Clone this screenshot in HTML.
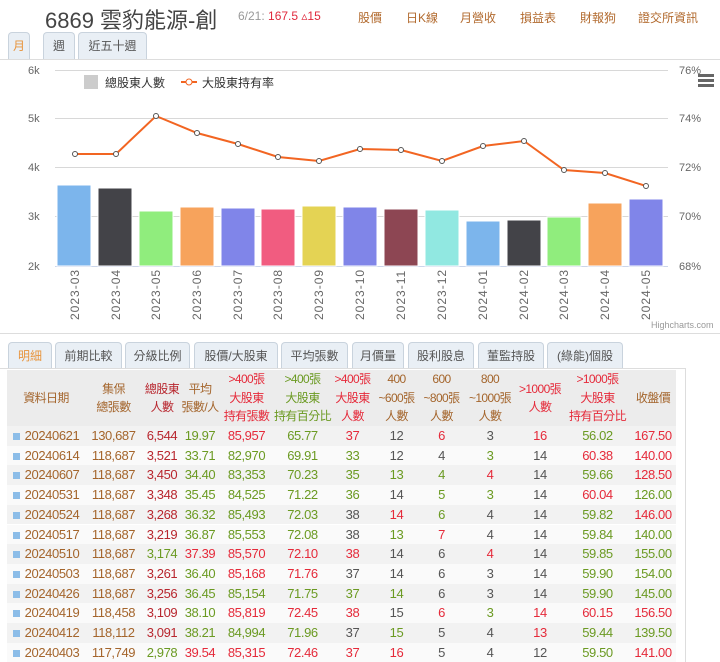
<!DOCTYPE html>
<html><head><meta charset="utf-8">
<style>
*{margin:0;padding:0;box-sizing:border-box}
body{width:720px;height:662px;overflow:hidden;background:#fff;font-family:"Liberation Sans","Noto Sans CJK TC",sans-serif;position:relative;color:#444}
.a{position:absolute;white-space:nowrap}
.tab{position:absolute;height:27px;border:1px solid #c9d3dd;border-bottom:none;border-radius:4px 4px 0 0;background:#e9eff5;font-size:12px;color:#555;text-align:center;line-height:26px}
.row{position:absolute;left:7px;width:669px;height:19.7px;display:flex;font-size:13px;line-height:19.7px;letter-spacing:-0.4px}
.row div{text-align:center;white-space:nowrap}
.hd{position:absolute;left:7px;top:370px;width:669px;height:56px;background:#ececec;display:flex;font-size:12px;line-height:18.5px;letter-spacing:-0.6px}
.hd div{text-align:center;display:flex;flex-direction:column;justify-content:center;white-space:nowrap;overflow:visible;align-items:center}
.c1{width:78px}.c2{width:57px}.c3{width:40px}.c4{width:36px}.c5{width:57px}.c6{width:55px}.c7{width:45px}.c8{width:43px}.c9{width:47px}.c10{width:50px}.c11{width:50px}.c12{width:65px}.c13{width:46px}
.r{color:#e52a3a}.g{color:#6b9a22}.b{color:#a4652c}.d{color:#555}.dr{color:#b8262e}
.sq{display:inline-block;width:7px;height:7px;background:#8cbde8;margin-right:5px;vertical-align:0px}
</style></head><body>
<div class="a" style="left:45px;top:3px;font-size:22px;color:#444">6869 雲豹能源-創</div>
<div class="a" style="left:238px;top:9px;font-size:12px;color:#999">6/21: <span style="color:#e0283c">167.5 ▵15</span></div>
<div class="a" style="left:358px;top:9px;font-size:12px;color:#b26a2e">股價</div>
<div class="a" style="left:406px;top:9px;font-size:12px;color:#b26a2e">日K線</div>
<div class="a" style="left:460px;top:9px;font-size:12px;color:#b26a2e">月營收</div>
<div class="a" style="left:520px;top:9px;font-size:12px;color:#b26a2e">損益表</div>
<div class="a" style="left:580px;top:9px;font-size:12px;color:#b26a2e">財報狗</div>
<div class="a" style="left:638px;top:9px;font-size:12px;color:#b26a2e">證交所資訊</div>

<div class="tab" style="left:8px;top:32px;width:22px;color:#e8943c">月</div>
<div class="tab" style="left:43px;top:32px;width:32px">週</div>
<div class="tab" style="left:78px;top:32px;width:69px">近五十週</div>

<div class="a" style="left:0;top:59px;width:720px;height:275px;border:1px solid #ddd;border-left:none;border-right:none"></div>
<svg class="a" style="left:0;top:59px" width="720" height="275" viewBox="0 59 720 275" font-family="Liberation Sans" font-size="11">
<g stroke="#d8d8d8" stroke-width="1">
<line x1="55" y1="70.5" x2="668" y2="70.5"/><line x1="55" y1="118.5" x2="668" y2="118.5"/><line x1="55" y1="167.5" x2="668" y2="167.5"/><line x1="55" y1="216.5" x2="668" y2="216.5"/>
</g>
<line x1="55" y1="266.5" x2="668" y2="266.5" stroke="#ccd6eb"/>
<g fill="#666"><text x="28" y="74">6k</text><text x="28" y="122">5k</text><text x="28" y="171">4k</text><text x="28" y="220">3k</text><text x="28" y="270">2k</text>
<text x="679" y="74">76%</text><text x="679" y="122">74%</text><text x="679" y="171">72%</text><text x="679" y="220">70%</text><text x="679" y="270">68%</text></g>
<g fill="#666"><rect x="698" y="74" width="16" height="3"/><rect x="698" y="79" width="16" height="3"/><rect x="698" y="84" width="16" height="3"/></g>
<rect x="84" y="75" width="14" height="14" fill="#ccc"/>
<text x="105" y="87" font-size="12" fill="#333" font-family="Liberation Sans,Noto Sans CJK TC">總股東人數</text>
<line x1="181" y1="82" x2="197" y2="82" stroke="#f26522" stroke-width="2"/><circle cx="189" cy="82" r="3" fill="#fff" stroke="#f26522"/>
<text x="202" y="87" font-size="12" fill="#333" font-family="Liberation Sans,Noto Sans CJK TC">大股東持有率</text>
<g stroke="#fff" stroke-width="1">
<rect x="57" y="185" width="34" height="81" fill="#7cb5ec"/>
<rect x="98" y="188" width="34" height="78" fill="#434348"/>
<rect x="139" y="211" width="34" height="55" fill="#90ed7d"/>
<rect x="180" y="207" width="34" height="59" fill="#f7a35c"/>
<rect x="221" y="208" width="34" height="58" fill="#8085e9"/>
<rect x="261" y="209" width="34" height="57" fill="#f15c80"/>
<rect x="302" y="206" width="34" height="60" fill="#e4d354"/>
<rect x="343" y="207" width="34" height="59" fill="#8085e8"/>
<rect x="384" y="209" width="34" height="57" fill="#8d4653"/>
<rect x="425" y="210" width="34" height="56" fill="#91e8e1"/>
<rect x="466" y="221" width="34" height="45" fill="#7cb5ec"/>
<rect x="507" y="220" width="34" height="46" fill="#434348"/>
<rect x="547" y="217" width="34" height="49" fill="#90ed7d"/>
<rect x="588" y="203" width="34" height="63" fill="#f7a35c"/>
<rect x="629" y="199" width="34" height="67" fill="#8085e9"/>
</g>
<polyline fill="none" stroke="#f26522" stroke-width="2" points="75,154 116,154 156,116 197,133 238,144 278,157 319,161 360,149 401,150 442,161 483,146 524,141 564,170 605,173 646,186"/>
<g fill="#fff" stroke="#555" stroke-width="1">
<circle cx="75" cy="154" r="2.5"/><circle cx="116" cy="154" r="2.5"/><circle cx="156" cy="116" r="2.5"/><circle cx="197" cy="133" r="2.5"/><circle cx="238" cy="144" r="2.5"/><circle cx="278" cy="157" r="2.5"/><circle cx="319" cy="161" r="2.5"/><circle cx="360" cy="149" r="2.5"/><circle cx="401" cy="150" r="2.5"/><circle cx="442" cy="161" r="2.5"/><circle cx="483" cy="146" r="2.5"/><circle cx="524" cy="141" r="2.5"/><circle cx="564" cy="170" r="2.5"/><circle cx="605" cy="173" r="2.5"/><circle cx="646" cy="186" r="2.5"/></g>
<g fill="#666" font-size="12" letter-spacing="1">
<text transform="translate(79,320) rotate(-90)">2023-03</text><text transform="translate(120,320) rotate(-90)">2023-04</text><text transform="translate(160,320) rotate(-90)">2023-05</text><text transform="translate(201,320) rotate(-90)">2023-06</text><text transform="translate(242,320) rotate(-90)">2023-07</text><text transform="translate(282,320) rotate(-90)">2023-08</text><text transform="translate(323,320) rotate(-90)">2023-09</text><text transform="translate(364,320) rotate(-90)">2023-10</text><text transform="translate(405,320) rotate(-90)">2023-11</text><text transform="translate(446,320) rotate(-90)">2023-12</text><text transform="translate(487,320) rotate(-90)">2024-01</text><text transform="translate(528,320) rotate(-90)">2024-02</text><text transform="translate(568,320) rotate(-90)">2024-03</text><text transform="translate(609,320) rotate(-90)">2024-04</text><text transform="translate(650,320) rotate(-90)">2024-05</text></g>
<text x="651" y="328" font-size="9" fill="#999">Highcharts.com</text>
</svg>

<div class="tab" style="left:8px;top:342px;width:44px;color:#e8943c">明細</div>
<div class="tab" style="left:55px;top:342px;width:67px">前期比較</div>
<div class="tab" style="left:125px;top:342px;width:65px">分級比例</div>
<div class="tab" style="left:194px;top:342px;width:84px">股價/大股東</div>
<div class="tab" style="left:281px;top:342px;width:67px">平均張數</div>
<div class="tab" style="left:352px;top:342px;width:52px">月價量</div>
<div class="tab" style="left:408px;top:342px;width:66px">股利股息</div>
<div class="tab" style="left:478px;top:342px;width:66px">董監持股</div>
<div class="tab" style="left:547px;top:342px;width:76px">(綠能)個股</div>
<div class="a" style="left:0;top:368px;width:686px;height:294px;border:1px solid #ddd;border-left:none;border-bottom:none"></div>

<div class="hd">
<div class="c1 b">資料日期</div><div class="c2 b">集保<br>總張數</div><div class="c3 dr">總股東<br>人數</div><div class="c4 b">平均<br>張數/人</div><div class="c5 r">&gt;400張<br>大股東<br>持有張數</div><div class="c6 g">&gt;400張<br>大股東<br>持有百分比</div><div class="c7 r">&gt;400張<br>大股東<br>人數</div><div class="c8 b">400<br>~600張<br>人數</div><div class="c9 b">600<br>~800張<br>人數</div><div class="c10 b">800<br>~1000張<br>人數</div><div class="c11 r">&gt;1000張<br>人數</div><div class="c12 r">&gt;1000張<br>大股東<br>持有百分比</div><div class="c13 b">收盤價</div>
</div>

<div class="row" style="top:426px;background:#f2f2f2"><div class="c1 b"><span class="sq"></span>20240621</div><div class="c2 b">130,687</div><div class="c3 dr">6,544</div><div class="c4 g">19.97</div><div class="c5 r">85,957</div><div class="c6 g">65.77</div><div class="c7 r">37</div><div class="c8 d">12</div><div class="c9 r">6</div><div class="c10 d">3</div><div class="c11 r">16</div><div class="c12 g">56.02</div><div class="c13 r">167.50</div></div>
<div class="row" style="top:445.7px;background:#fafafa"><div class="c1 b"><span class="sq"></span>20240614</div><div class="c2 b">118,687</div><div class="c3 dr">3,521</div><div class="c4 g">33.71</div><div class="c5 g">82,970</div><div class="c6 g">69.91</div><div class="c7 g">33</div><div class="c8 d">12</div><div class="c9 d">4</div><div class="c10 g">3</div><div class="c11 d">14</div><div class="c12 r">60.38</div><div class="c13 r">140.00</div></div>
<div class="row" style="top:465.4px;background:#f2f2f2"><div class="c1 b"><span class="sq"></span>20240607</div><div class="c2 b">118,687</div><div class="c3 dr">3,450</div><div class="c4 g">34.40</div><div class="c5 g">83,353</div><div class="c6 g">70.23</div><div class="c7 g">35</div><div class="c8 g">13</div><div class="c9 g">4</div><div class="c10 r">4</div><div class="c11 d">14</div><div class="c12 g">59.66</div><div class="c13 r">128.50</div></div>
<div class="row" style="top:485.1px;background:#fafafa"><div class="c1 b"><span class="sq"></span>20240531</div><div class="c2 b">118,687</div><div class="c3 dr">3,348</div><div class="c4 g">35.45</div><div class="c5 g">84,525</div><div class="c6 g">71.22</div><div class="c7 g">36</div><div class="c8 d">14</div><div class="c9 g">5</div><div class="c10 g">3</div><div class="c11 d">14</div><div class="c12 r">60.04</div><div class="c13 g">126.00</div></div>
<div class="row" style="top:504.8px;background:#f2f2f2"><div class="c1 b"><span class="sq"></span>20240524</div><div class="c2 b">118,687</div><div class="c3 dr">3,268</div><div class="c4 g">36.32</div><div class="c5 g">85,493</div><div class="c6 g">72.03</div><div class="c7 d">38</div><div class="c8 r">14</div><div class="c9 g">6</div><div class="c10 d">4</div><div class="c11 d">14</div><div class="c12 g">59.82</div><div class="c13 r">146.00</div></div>
<div class="row" style="top:524.5px;background:#fafafa"><div class="c1 b"><span class="sq"></span>20240517</div><div class="c2 b">118,687</div><div class="c3 dr">3,219</div><div class="c4 g">36.87</div><div class="c5 g">85,553</div><div class="c6 g">72.08</div><div class="c7 d">38</div><div class="c8 g">13</div><div class="c9 r">7</div><div class="c10 d">4</div><div class="c11 d">14</div><div class="c12 g">59.84</div><div class="c13 g">140.00</div></div>
<div class="row" style="top:544.2px;background:#f2f2f2"><div class="c1 b"><span class="sq"></span>20240510</div><div class="c2 b">118,687</div><div class="c3 g">3,174</div><div class="c4 r">37.39</div><div class="c5 r">85,570</div><div class="c6 r">72.10</div><div class="c7 r">38</div><div class="c8 d">14</div><div class="c9 d">6</div><div class="c10 r">4</div><div class="c11 d">14</div><div class="c12 g">59.85</div><div class="c13 g">155.00</div></div>
<div class="row" style="top:563.9px;background:#fafafa"><div class="c1 b"><span class="sq"></span>20240503</div><div class="c2 b">118,687</div><div class="c3 dr">3,261</div><div class="c4 g">36.40</div><div class="c5 r">85,168</div><div class="c6 r">71.76</div><div class="c7 d">37</div><div class="c8 d">14</div><div class="c9 d">6</div><div class="c10 d">3</div><div class="c11 d">14</div><div class="c12 g">59.90</div><div class="c13 g">154.00</div></div>
<div class="row" style="top:583.6px;background:#f2f2f2"><div class="c1 b"><span class="sq"></span>20240426</div><div class="c2 b">118,687</div><div class="c3 dr">3,256</div><div class="c4 g">36.45</div><div class="c5 g">85,154</div><div class="c6 g">71.75</div><div class="c7 g">37</div><div class="c8 g">14</div><div class="c9 d">6</div><div class="c10 d">3</div><div class="c11 d">14</div><div class="c12 g">59.90</div><div class="c13 g">145.00</div></div>
<div class="row" style="top:603.3px;background:#fafafa"><div class="c1 b"><span class="sq"></span>20240419</div><div class="c2 b">118,458</div><div class="c3 dr">3,109</div><div class="c4 g">38.10</div><div class="c5 r">85,819</div><div class="c6 r">72.45</div><div class="c7 r">38</div><div class="c8 d">15</div><div class="c9 r">6</div><div class="c10 g">3</div><div class="c11 r">14</div><div class="c12 r">60.15</div><div class="c13 r">156.50</div></div>
<div class="row" style="top:623px;background:#f2f2f2"><div class="c1 b"><span class="sq"></span>20240412</div><div class="c2 b">118,112</div><div class="c3 dr">3,091</div><div class="c4 g">38.21</div><div class="c5 g">84,994</div><div class="c6 g">71.96</div><div class="c7 d">37</div><div class="c8 g">15</div><div class="c9 d">5</div><div class="c10 d">4</div><div class="c11 r">13</div><div class="c12 g">59.44</div><div class="c13 g">139.50</div></div>
<div class="row" style="top:642.7px;background:#fafafa"><div class="c1 b"><span class="sq"></span>20240403</div><div class="c2 b">117,749</div><div class="c3 g">2,978</div><div class="c4 r">39.54</div><div class="c5 r">85,315</div><div class="c6 r">72.46</div><div class="c7 r">37</div><div class="c8 r">16</div><div class="c9 d">5</div><div class="c10 d">4</div><div class="c11 d">12</div><div class="c12 g">59.50</div><div class="c13 r">141.00</div></div>
</body></html>
